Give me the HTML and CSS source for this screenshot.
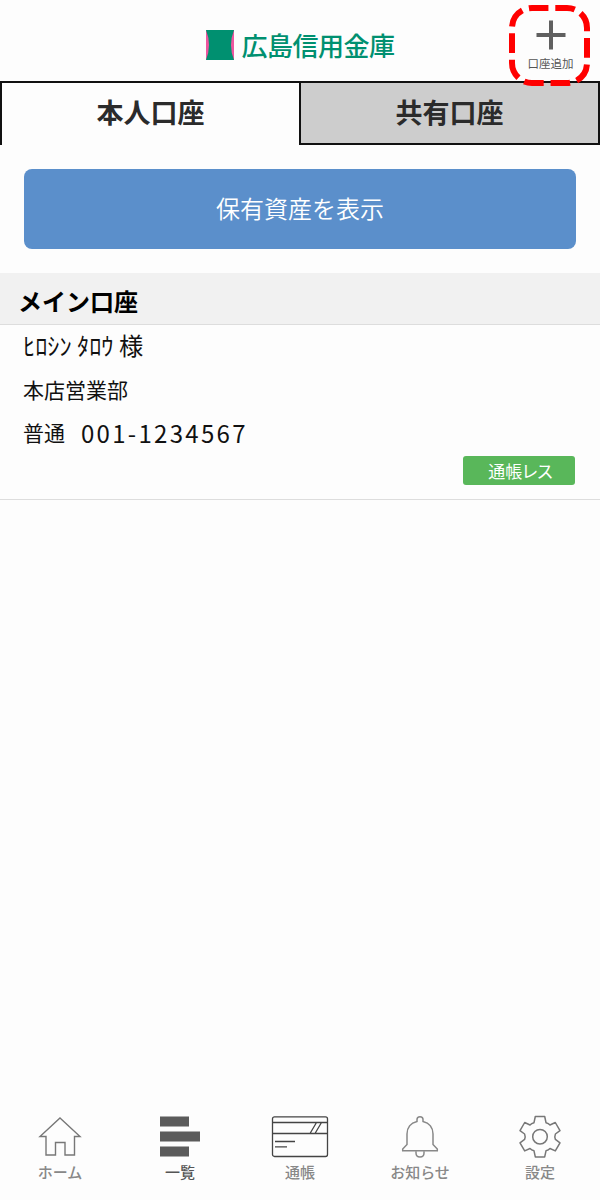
FILE: index.html
```
<!DOCTYPE html>
<html lang="ja">
<head>
    <meta charset="UTF-8">
    <meta name="viewport" content="width=device-width, initial-scale=1.0">
    <title>広島信用金庫</title>
    <link rel="stylesheet" href="styles.css">
</head>
<body>
    <header class="header">
        <div class="logo">
            <svg class="logo-mark" width="28" height="30" viewBox="0 0 28 30">
                <rect width="28" height="30" fill="#ee559f"/>
                <path d="M0 0H28Q22 15 28 30H0Q6 15 0 0Z" fill="#009070"/>
            </svg>
            <span class="logo-name">広島信用金庫</span>
        </div>
        <button class="add-account">
            <svg width="30" height="30" viewBox="0 0 30 30">
                <path d="M15 0.500V29.500M0.500 15H29.500" stroke="#606060" stroke-width="4"/>
            </svg>
            <span>口座追加</span>
        </button>
        <!-- Highlight around the add button -->
        <svg class="highlight" width="82" height="83" viewBox="0 0 82 83">
            <path pathLength="270" d="M46.300 4H58A20 20 0 0 1 78 24V59A20 20 0 0 1 58 79H23A20 20 0 0 1 3 59V24A20 20 0 0 1 23 4Z" fill="none" stroke="#f00" stroke-width="6" stroke-dasharray="20 7"/>
        </svg>
    </header>

    <nav class="tabs">
        <button class="tab active">本人口座</button>
        <button class="tab">共有口座</button>
    </nav>

    <main>
        <button class="assets-button">保有資産を表示</button>

        <section class="account">
            <h2>メイン口座</h2>
            <div class="account-body">
                <p class="holder">ﾋﾛｼﾝ ﾀﾛｳ 様</p>
                <p class="branch">本店営業部</p>
                <p class="number"><span>普通</span><span class="digits">001-1234567</span></p>
                <span class="badge">通帳レス</span>
            </div>
        </section>
    </main>

    <nav class="bottom-nav">
        <a class="nav-item">
            <svg width="44" height="44" viewBox="0 0 44 44" fill="none" stroke="#777" stroke-width="1.400">
                <path d="M22 3L42 21.500H36.500V40H27V27.500H17.500V40H8V21.500H2Z"/>
            </svg>
            <span>ホーム</span>
        </a>
        <a class="nav-item current">
            <svg width="44" height="44" viewBox="0 0 44 44" fill="#5b5b5b">
                <path d="M2 1.500H31V11.500H2ZM2 16.500H42V26.500H2ZM2 31.500H31V41.500H2Z"/>
            </svg>
            <span>一覧</span>
        </a>
        <a class="nav-item passbook">
            <svg width="58" height="44" viewBox="0 0 58 44" fill="none" stroke="#444" stroke-width="1.300">
                <rect x="1.500" y="1.800" width="55" height="39.700" rx="2"/>
                <path d="M1.500 7.500H56.500M1.500 18.500H56.500M39 18.500L45.500 7.500M44 18.500L50.500 7.500M4 26.500H24M4 31.800H16"/>
            </svg>
            <span>通帳</span>
        </a>
        <a class="nav-item">
            <svg width="44" height="44" viewBox="0 0 44 44" fill="none" stroke="#888" stroke-width="1.500">
                <path d="M19 6.500V4.500Q19 1.700 22 1.700T25 4.500V6.500C31.500 8 35 13 35 19V29.500L39.300 34V35.700H4.700V34L9 29.500V19C9 13 12.500 8 19 6.500Z"/>
                <path d="M18 36.200V38C18 43.300 26 43.300 26 38V36.200"/>
            </svg>
            <span>お知らせ</span>
        </a>
        <a class="nav-item">
            <svg width="44" height="44" viewBox="0 0 44 44" fill="none" stroke="#777" stroke-width="1.500" stroke-linejoin="round">
                <path d="M17.300 1.500H26.700L28 7.700Q30.500 8.300 32 10L37.300 7.500L42 15.700L37.400 19Q36.300 21.700 37.400 24.400L42 27.800L37.300 35.900L32 33.500Q30.500 35.200 28 35.800L26.700 41.900H17.300L16 35.800Q13.500 35.200 12 33.500L6.700 35.900L2 27.800L6.600 24.400Q7.700 21.700 6.600 19L2 15.700L6.700 7.500L12 10Q13.500 8.300 16 7.700Z"/>
                <circle cx="22" cy="21.700" r="7.300"/>
            </svg>
            <span>設定</span>
        </a>
    </nav>
</body>
</html>
```
FILE: styles.css
```
* {
    margin: 0;
    padding: 0;
    box-sizing: border-box;
}

body {
    display: flex;
    flex-direction: column;
    height: 1200px;
    background: #fdfdfd;
    color: #111;
    font-family: "Noto Sans CJK JP", "Noto Sans", sans-serif;
    overflow: hidden;
}

button {
    border: none;
    background: none;
    font-family: inherit;
    color: inherit;
}

svg {
    display: block;
}

.header {
    position: relative;
    display: grid;
    grid-template-columns: 1fr auto 1fr;
    height: 81px;
}

.logo {
    grid-column: 2;
    display: flex;
    align-items: center;
    gap: 7px;
    padding: 9px 0 0 1px;
}

.logo-name {
    color: #009070;
    font-size: 26px;
    font-weight: 500;
    line-height: 30px;
    letter-spacing: -0.500px;
}

.add-account {
    justify-self: end;
    display: flex;
    flex-direction: column;
    align-items: center;
    width: 99px;
    padding-top: 20px;
    color: #555;
    font-size: 11.500px;
    line-height: 16px;
}

.add-account span {
    margin-top: 5px;
}

/* Drawn over the header and the top edge of the tabs */
.highlight {
    position: absolute;
    top: 4px;
    right: 9px;
    z-index: 1;
}

.tabs {
    display: grid;
    grid-template-columns: 299px 301px;
    height: 64px;
    border-top: 2px solid #111;
}

.tab {
    padding-bottom: 2px;
    background: #cdcdcd;
    border: 2px solid #111;
    border-top: none;
    color: #2b2b2b;
    font-size: 27px;
    font-weight: 700;
    line-height: 56px;
}

.tab.active {
    padding-bottom: 5px;
    background: #fdfdfd;
    border-width: 0 0 0 2px;
}

main {
    flex: 1;
}

.assets-button {
    display: block;
    width: 552px;
    height: 80px;
    margin: 24px 24px;
    padding-bottom: 4px;
    border-radius: 8px;
    background: #5b8fcb;
    color: #fff;
    font-size: 24px;
    font-weight: 350;
}

.account {
    border-bottom: 1px solid #ddd;
}

.account h2 {
    height: 52px;
    padding-left: 18px;
    background: #f1f1f1;
    border-bottom: 1px solid #ddd;
    color: #000;
    font-size: 24px;
    font-weight: 700;
    line-height: 55px;
}

.account-body {
    display: flex;
    flex-direction: column;
    height: 174px;
    padding: 0 25px 0 23px;
}

.holder {
    height: 42px;
    font-size: 24.300px;
    line-height: 40px;
}

.branch {
    font-size: 21px;
    line-height: 44px;
}

.number {
    display: flex;
    gap: 16px;
    height: 45px;
    font-size: 21px;
    line-height: 43px;
}

.digits {
    font-size: 24px;
    letter-spacing: 2.300px;
}

.badge {
    align-self: flex-end;
    width: 112px;
    height: 29px;
    padding-left: 3px;
    border-radius: 3px;
    background: #59b75a;
    color: #fff;
    font-size: 17px;
    font-feature-settings: "palt";
    line-height: 30px;
    text-align: center;
}

.bottom-nav {
    display: grid;
    grid-template-columns: repeat(5, 1fr);
    height: 85px;
}

.nav-item {
    display: flex;
    flex-direction: column;
    align-items: center;
    color: #888;
    font-size: 15px;
    font-weight: 500;
    line-height: 20px;
}

.nav-item span {
    margin-top: 3px;
}

.nav-item.current {
    color: #555;
}
```
